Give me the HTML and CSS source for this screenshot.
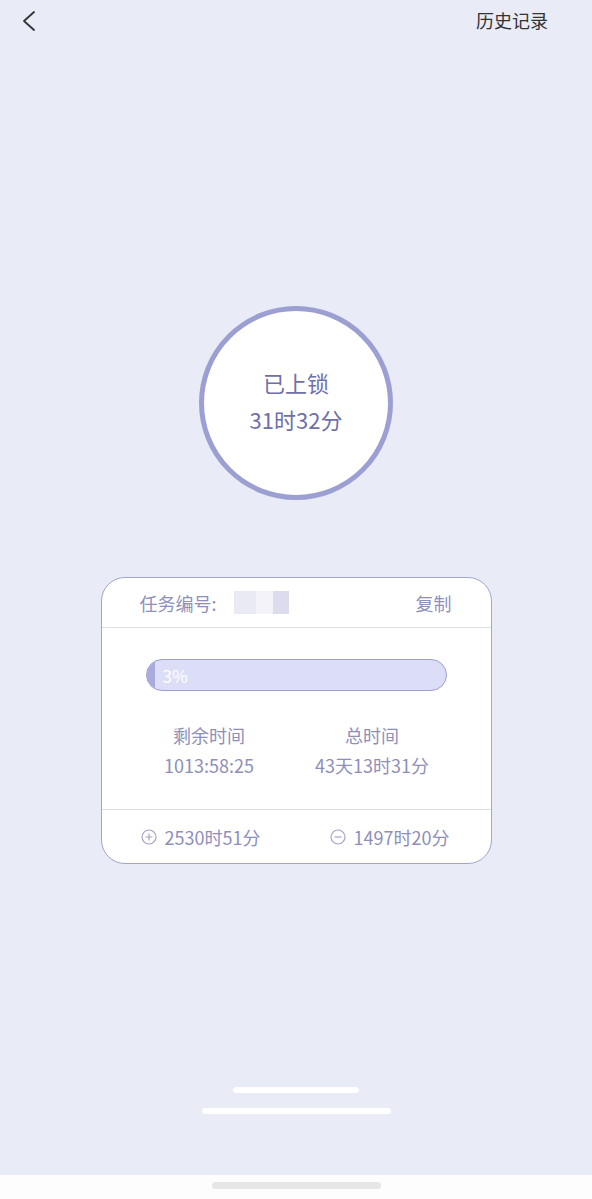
FILE: index.html
```html
<!DOCTYPE html>
<html lang="zh-CN">
<head>
    <meta charset="UTF-8">
    <meta name="viewport" content="width=device-width, initial-scale=1.0">
    <title>已上锁</title>
    <link rel="stylesheet" href="styles.css">
</head>
<body>
    <div class="topbar">
        <svg class="back" width="20" height="24" viewBox="0 0 20 24">
            <polyline points="13,3 3,12 13,21" fill="none" stroke="#333" stroke-width="1.8" stroke-linecap="round" stroke-linejoin="round"/>
        </svg>
        <span class="history">历史记录</span>
    </div>

    <div class="lock-circle">
        <div>已上锁</div>
        <div>31时32分</div>
    </div>

    <div class="card">
        <div class="card-head">
            <div class="task-no">任务编号:<span class="masked"></span></div>
            <span>复制</span>
        </div>
        <div class="card-body">
            <div class="progress">
                <div class="progress-fill" style="width: 3%"></div>
                <span class="progress-text">3%</span>
            </div>
            <div class="stats">
                <div class="stat">
                    <div>剩余时间</div>
                    <div>1013:58:25</div>
                </div>
                <div class="stat">
                    <div>总时间</div>
                    <div>43天13时31分</div>
                </div>
            </div>
        </div>
        <div class="card-foot">
            <div class="adjust">
                <svg width="16" height="16" viewBox="0 0 16 16">
                    <circle cx="8" cy="8" r="7" fill="none" stroke="#a3a4c8" stroke-width="1.2"/>
                    <path d="M8 4.5v7M4.5 8h7" stroke="#a3a4c8" stroke-width="1.2"/>
                </svg>
                2530时51分
            </div>
            <div class="adjust">
                <svg width="16" height="16" viewBox="0 0 16 16">
                    <circle cx="8" cy="8" r="7" fill="none" stroke="#a3a4c8" stroke-width="1.2"/>
                    <path d="M4.5 8h7" stroke="#a3a4c8" stroke-width="1.2"/>
                </svg>
                1497时20分
            </div>
        </div>
    </div>

    <div class="placeholder">
        <div class="line short"></div>
        <div class="line long"></div>
    </div>

    <div class="home-area">
        <div class="home-bar"></div>
    </div>
</body>
</html>
```

FILE: styles.css
```css
html, body {
    height: 100%;
}
body {
    margin: 0;
    background-color: #e9ebf6;
    font-family: "Noto Sans CJK SC", "Noto Sans", sans-serif;
    display: flex;
    flex-direction: column;
    align-items: center;
}
.topbar {
    align-self: stretch;
    height: 40px;
    display: flex;
    align-items: center;
    justify-content: space-between;
    padding: 2px 44px 0 21px;
    box-sizing: border-box;
}
.back {
    display: block;
}
.history {
    font-size: 18px;
    color: #333;
    margin-top: -2px;
}
.lock-circle {
    margin-top: 266px;
    width: 194px;
    height: 194px;
    box-sizing: border-box;
    border: 5px solid #9c9fd1;
    border-radius: 50%;
    background: #fff;
    display: flex;
    flex-direction: column;
    align-items: center;
    justify-content: center;
    gap: 5px;
    padding-bottom: 5px;
    font-size: 22px;
    line-height: 32px;
    color: #6f70a9;
}
.card {
    margin-top: 77px;
    width: 391px;
    box-sizing: border-box;
    background: #fff;
    border: 1px solid #a3a4d0;
    border-radius: 24px;
    color: #8e8fba;
    font-size: 18px;
}
.card-head {
    height: 49px;
    display: flex;
    align-items: center;
    justify-content: space-between;
    padding: 0 39px 0 38px;
    border-bottom: 1px solid #dedee9;
}
.task-no {
    display: flex;
    align-items: center;
}
.masked {
    display: inline-block;
    width: 55px;
    height: 23px;
    margin-left: 17px;
    background: linear-gradient(90deg, #eaeaf5 0 40%, #f3f3f9 40% 70%, #dcdcee 70%);
}
.card-body {
    padding: 31px 0 0;
    height: 182px;
    box-sizing: border-box;
    border-bottom: 1px solid #dedee9;
}
.progress {
    position: relative;
    margin: 0 44px;
    height: 32px;
    box-sizing: border-box;
    border: 1px solid #9d9fcf;
    border-radius: 16px;
    background: #dcdef7;
    overflow: hidden;
    display: flex;
    align-items: center;
}
.progress-fill {
    position: absolute;
    left: 0;
    top: 0;
    bottom: 0;
    background: #a9abdc;
}
.progress-text {
    position: relative;
    margin-left: 16px;
    color: #fff;
    font-size: 17px;
}
.stats {
    display: grid;
    grid-template-columns: 1fr 1fr;
    padding: 0 37px 0 26px;
    margin-top: 29px;
}
.stat {
    text-align: center;
    line-height: 30px;
}
.card-foot {
    height: 53px;
    display: flex;
    align-items: center;
    padding: 0 0 0 39px;
}
.adjust {
    flex: none;
    display: flex;
    align-items: center;
    gap: 8px;
    width: 189px;
}
.placeholder {
    margin-top: 223px;
    display: flex;
    flex-direction: column;
    align-items: center;
    gap: 15px;
}
.line {
    height: 6px;
    border-radius: 3px;
    background: #fff;
}
.short {
    width: 126px;
}
.long {
    width: 189px;
}
.home-area {
    margin-top: auto;
    align-self: stretch;
    height: 24px;
    background: #fdfdfd;
    display: flex;
    justify-content: center;
    padding-top: 7px;
    box-sizing: border-box;
}
.home-bar {
    width: 169px;
    height: 7px;
    border-radius: 4px;
    background: #e6e6e6;
}
```
